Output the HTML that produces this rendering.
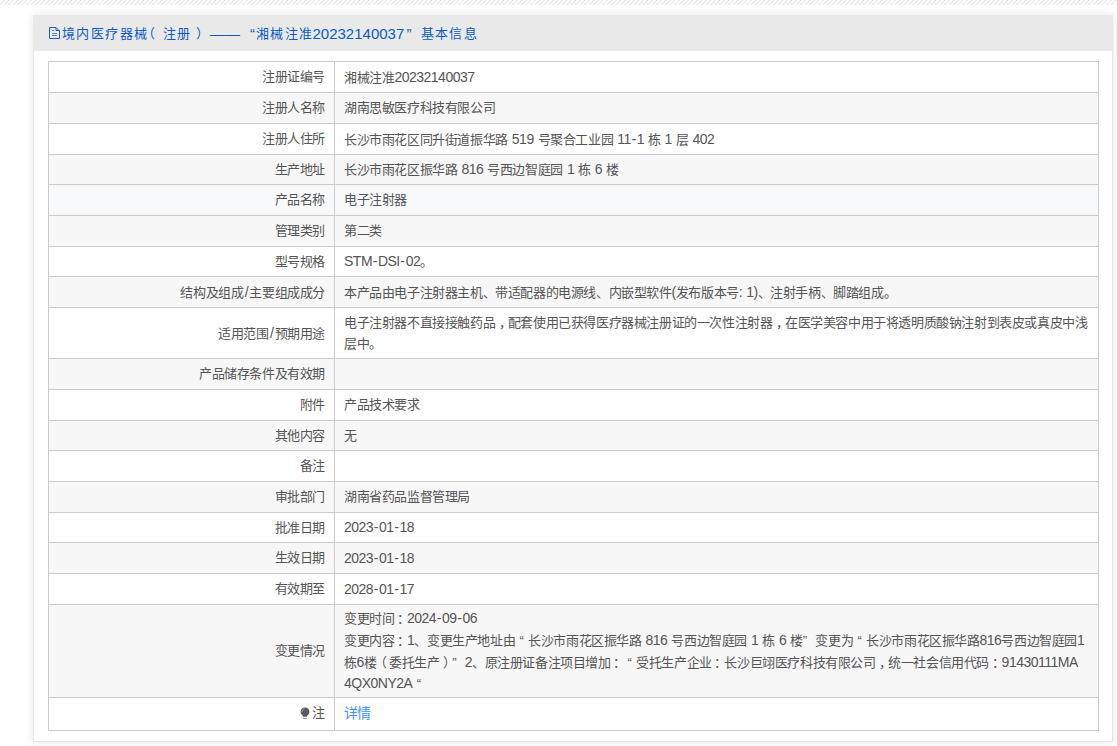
<!DOCTYPE html>
<html lang="zh-CN">
<head>
<meta charset="utf-8">
<style>
html,body{margin:0;padding:0;background:#fff;width:1117px;height:746px;overflow:hidden;font-family:"Liberation Sans",sans-serif;text-spacing-trim:space-all;}
.stripes{position:absolute;left:0;top:0;width:1117px;height:5px;overflow:hidden;}
.stripes svg{display:block}
.box{position:absolute;left:33px;top:15px;width:1080px;height:727px;box-shadow:0 0 10px rgba(0,0,0,.10);background:#fff;}
.hd{position:absolute;left:0;top:0;width:1080px;height:35px;background:#e9e9e9;color:#0b5bc5;font-size:14px;white-space:nowrap;}
.hd span{position:absolute;top:1px;line-height:35px;}
.bd{position:absolute;left:0;top:35px;width:1078px;height:690px;border:1px solid #e6e6e6;border-top:1px solid #e9ecf4;background:#fff;}
table{position:absolute;left:14px;top:10px;width:1051px;border-collapse:collapse;table-layout:fixed;}
td{border:1px solid #cbcbcb;font-size:13px;letter-spacing:-0.4px;color:#555;padding:1px 9px 0 9px;line-height:20.8px;white-space:nowrap;overflow:hidden;}
td.l{text-align:right;width:267px;}
tr{height:30.8px;}
tr.g td{background:#f7f7f7;}
tr.h td{background:#f8f9fb;}
.d{letter-spacing:-0.5px;font-size:14px;}
s{text-decoration:none;}
s.hy{letter-spacing:0.6px;padding-left:0.6px;}
s.sl{padding:0 1.3px;}
i{font-style:normal;display:inline-block;letter-spacing:0;}
i.ql{width:13px;text-align:center;}
i.qr{width:12.5px;text-align:left;}
a{color:#3d95ff;text-decoration:none;font-size:14px;letter-spacing:-1.4px;}
tr.last td{padding-top:0;padding-bottom:1px;}
.bulb{vertical-align:-3px;margin-right:2px;}
b{font-weight:normal;position:relative;}
b.pc{left:3.5px;}
b.pk{left:2.5px;}
b.po{left:-3px;}
b.pp{left:3px;}
s.sp{letter-spacing:0.1px;}
.hd span.t{font-size:13px;letter-spacing:1.4px;}

</style>
</head>
<body>
<div class="stripes"><svg width="1117" height="5"><defs><pattern id="p" width="4.5" height="4.5" patternUnits="userSpaceOnUse"><path d="M-1 5.5L5.5 -1" stroke="#cfcfcf" stroke-width="0.8"/></pattern></defs><rect width="1117" height="5" fill="url(#p)"/></svg></div>
<div class="box">
  <div class="hd"><svg width="14" height="15" viewBox="0 0 14 15" style="position:absolute;left:15px;top:11px"><path d="M1.5 1.5H8L11.5 5V12.5H1.5Z" fill="none" stroke="#1a5cc6" stroke-width="1"/><path d="M8 1.5V4.5H11.5" fill="none" stroke="#1a5cc6" stroke-width="1"/><path d="M4 4.5H6M4 7.5H9M4 9.5H9" stroke="#3f64c0" stroke-width="1" opacity=".8"/></svg>
<span class="t" style="left:29px">境内医疗器械<b style="left:-6.5px">（</b>注册<b style="left:4.5px">）</b></span>
<span style="left:177px;font-size:15px">——</span>
<span style="left:217px;font-size:15px">“</span>
<span class="t" style="left:223px">湘械注准</span>
<span style="left:279.5px;font-size:15px">20232140037</span>
<span style="left:373.5px;font-size:15px">”</span>
<span class="t" style="left:387.5px">基本信息</span>
</div>
  <div class="bd">
  <table>
<tr style="height:31px"><td class="l">注册证编号</td><td class="v">湘械注准<span class="d">20232140037</span></td></tr>
<tr class="g" style="height:31px"><td class="l">注册人名称</td><td class="v">湖南思敏医疗科技有限公司</td></tr>
<tr style="height:31px"><td class="l">注册人住所</td><td class="v">长沙市雨花区同升街道振华路<span class="d"><s class="sp"> </s>519<s class="sp"> </s></span>号聚合工业园<span class="d"><s class="sp"> </s>11<s class="hy">-</s>1<s class="sp"> </s></span>栋<span class="d"><s class="sp"> </s>1<s class="sp"> </s></span>层<span class="d"><s class="sp"> </s>402</span></td></tr>
<tr class="g" style="height:30px"><td class="l">生产地址</td><td class="v">长沙市雨花区振华路<span class="d"><s class="sp"> </s>816<s class="sp"> </s></span>号西边智庭园<span class="d"><s class="sp"> </s>1<s class="sp"> </s></span>栋<span class="d"><s class="sp"> </s>6<s class="sp"> </s></span>楼</td></tr>
<tr class="h" style="height:31px"><td class="l">产品名称</td><td class="v">电子注射器</td></tr>
<tr class="g" style="height:31px"><td class="l">管理类别</td><td class="v">第二类</td></tr>
<tr style="height:30px"><td class="l">型号规格</td><td class="v"><span class="d">STM<s class="hy">-</s>DSI<s class="hy">-</s>02</span>。</td></tr>
<tr class="g" style="height:31px"><td class="l">结构及组成<span class="d"><s class="sl">/</s></span>主要组成成分</td><td class="v">本产品由电子注射器主机、带适配器的电源线、内嵌型软件<span class="d">(</span>发布版本号<span class="d">:<s class="sp"> </s>1)</span>、注射手柄、脚踏组成。</td></tr>
<tr style="height:51px"><td class="l">适用范围<span class="d"><s class="sl">/</s></span>预期用途</td><td class="v">电子注射器不直接接触药品<b class="pc">，</b>配套使用已获得医疗器械注册证的一次性注射器<b class="pc">，</b>在医学美容中用于将透明质酸钠注射到表皮或真皮中浅<br>层中。</td></tr>
<tr class="g" style="height:31px"><td class="l">产品储存条件及有效期</td><td class="v"></td></tr>
<tr style="height:31px"><td class="l">附件</td><td class="v">产品技术要求</td></tr>
<tr class="g" style="height:30px"><td class="l">其他内容</td><td class="v">无</td></tr>
<tr style="height:31px"><td class="l">备注</td><td class="v"></td></tr>
<tr class="g" style="height:31px"><td class="l">审批部门</td><td class="v">湖南省药品监督管理局</td></tr>
<tr style="height:30px"><td class="l">批准日期</td><td class="v"><span class="d">2023<s class="hy">-</s>01<s class="hy">-</s>18</span></td></tr>
<tr class="g" style="height:31px"><td class="l">生效日期</td><td class="v"><span class="d">2023<s class="hy">-</s>01<s class="hy">-</s>18</span></td></tr>
<tr style="height:31px"><td class="l">有效期至</td><td class="v"><span class="d">2028<s class="hy">-</s>01<s class="hy">-</s>17</span></td></tr>
<tr class="g" style="height:93px"><td class="l">变更情况</td><td class="v">变更时间<b class="pk">：</b><span class="d">2024<s class="hy">-</s>09<s class="hy">-</s>06</span><br>变更内容<b class="pk">：</b><span class="d">1</span>、变更生产地址由<i class="ql">“</i>长沙市雨花区振华路<span class="d"><s class="sp"> </s>816<s class="sp"> </s></span>号西边智庭园<span class="d"><s class="sp"> </s>1<s class="sp"> </s></span>栋<span class="d"><s class="sp"> </s>6<s class="sp"> </s></span>楼<i class="qr">”</i>变更为<i class="ql">“</i>长沙市雨花区振华路<span class="d">816</span>号西边智庭园<span class="d">1</span><br>栋<span class="d">6</span>楼<b class="po">（</b>委托生产<b class="pp">）</b><i class="qr">”</i><span class="d">2</span>、原注册证备注项目增加<b class="pk">：</b><i class="ql">“</i>受托生产企业<b class="pk">：</b>长沙巨翊医疗科技有限公司<b class="pc">，</b>统一社会信用代码<b class="pk">：</b><span class="d">91430111MA</span><br><span class="d">4QX0NY2A</span><i class="ql">“</i></td></tr>
<tr class="last" style="height:33px"><td class="l"><svg class="bulb" width="10" height="13" viewBox="0 0 10 13"><path d="M5 0.6C2.4 0.6 0.6 2.5 0.6 4.8c0 1.5 0.8 2.5 1.6 3.3 0.5 0.5 0.8 0.9 0.9 1.6h3.8c0.1-0.7 0.4-1.1 0.9-1.6 0.8-0.8 1.6-1.8 1.6-3.3C9.4 2.5 7.6 0.6 5 0.6z" fill="#5a5a5a"/><path d="M3.2 11.4h3.6" stroke="#777" stroke-width="0.9"/><path d="M1.9 5.2C1.9 3.4 3 2.2 4.4 1.9" fill="none" stroke="#bbb" stroke-width="0.8"/></svg>注</td><td class="v"><a>详情</a></td></tr>
  </table>
  </div>
</div>
</body>
</html>
